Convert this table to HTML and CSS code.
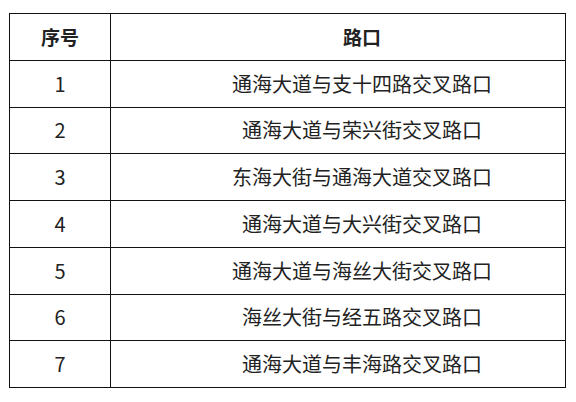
FILE: index.html
```html
<!DOCTYPE html>
<html lang="zh-CN">
<head>
<meta charset="utf-8">
<link rel="stylesheet" href="styles.css">
</head>
<body>
<table class="crossings">
  <thead>
    <tr><th class="num">序号</th><th class="name">路口</th></tr>
  </thead>
  <tbody>
    <tr><td class="num">1</td><td class="name">通海大道与支十四路交叉路口</td></tr>
    <tr><td class="num">2</td><td class="name">通海大道与荣兴街交叉路口</td></tr>
    <tr><td class="num">3</td><td class="name">东海大街与通海大道交叉路口</td></tr>
    <tr><td class="num">4</td><td class="name">通海大道与大兴街交叉路口</td></tr>
    <tr><td class="num">5</td><td class="name">通海大道与海丝大街交叉路口</td></tr>
    <tr><td class="num">6</td><td class="name">海丝大街与经五路交叉路口</td></tr>
    <tr><td class="num">7</td><td class="name">通海大道与丰海路交叉路口</td></tr>
  </tbody>
</table>
</body>
</html>
```

FILE: styles.css
```css
html, body {
  margin: 0;
  padding: 0;
  background: #ffffff;
}
body {
  padding: 13px 0 0 9px;
  font-family: "Noto Sans CJK SC", "Noto Sans", sans-serif;
  color: #222;
}
.crossings {
  border-collapse: collapse;
  width: 557px;
  table-layout: fixed;
}
.crossings th,
.crossings td {
  border: 1px solid #111;
  height: 45.75px;
  padding: 0;
  text-align: center;
  vertical-align: middle;
  font-size: 20px;
  line-height: 1;
}
.crossings th {
  font-weight: 700;
  font-size: 19px;
}
.crossings .num {
  width: 100px;
}
.crossings .name {
  padding-left: 48px;
}
```
